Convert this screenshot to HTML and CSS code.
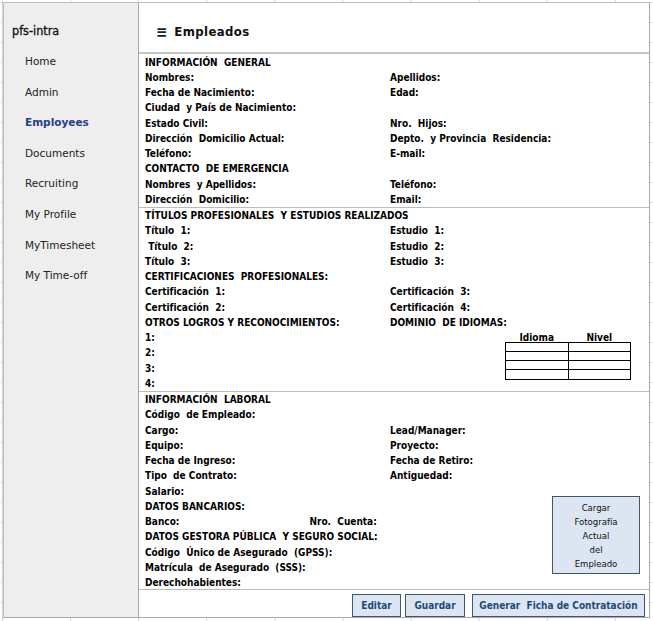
FILE: index.html
```html
<!DOCTYPE html>
<html lang="es">
<head>
<meta charset="utf-8">
<title>pfs-intra - Empleados</title>
<link rel="stylesheet" href="styles.css">
</head>
<body>
<div class="app">
  <aside class="sidebar">
    <div class="brand">pfs-intra</div>
    <nav class="nav">
      <a class="nav-item">Home</a>
      <a class="nav-item">Admin</a>
      <a class="nav-item active">Employees</a>
      <a class="nav-item">Documents</a>
      <a class="nav-item">Recruiting</a>
      <a class="nav-item">My Profile</a>
      <a class="nav-item">MyTimesheet</a>
      <a class="nav-item">My Time-off</a>
    </nav>
  </aside>
  <main class="main">
    <header class="header">
      <span class="menu-icon">≡</span>
      <h1 class="title">Empleados</h1>
    </header>

    <section class="sheet sec1">
      <div class="full">INFORMACIÓN&nbsp; GENERAL</div>
      <div>Nombres:</div><div>Apellidos:</div>
      <div>Fecha de Nacimiento:</div><div>Edad:</div>
      <div>Ciudad&nbsp; y País de Nacimiento:</div><div></div>
      <div>Estado Civil:</div><div>Nro.&nbsp; Hijos:</div>
      <div>Dirección&nbsp; Domicilio Actual:</div><div>Depto.&nbsp; y Provincia&nbsp; Residencia:</div>
      <div>Teléfono:</div><div>E-mail:</div>
      <div class="full">CONTACTO&nbsp; DE EMERGENCIA</div>
      <div>Nombres&nbsp; y Apellidos:</div><div>Teléfono:</div>
      <div>Dirección&nbsp; Domicilio:</div><div>Email:</div>
    </section>

    <section class="sheet sec2">
      <div class="full">TÍTULOS PROFESIONALES&nbsp; Y ESTUDIOS REALIZADOS</div>
      <div>Título&nbsp; 1:</div><div>Estudio&nbsp; 1:</div>
      <div>&nbsp;Título&nbsp; 2:</div><div>Estudio&nbsp; 2:</div>
      <div>Título&nbsp; 3:</div><div>Estudio&nbsp; 3:</div>
      <div>CERTIFICACIONES&nbsp; PROFESIONALES:</div><div></div>
      <div>Certificación&nbsp; 1:</div><div>Certificación&nbsp; 3:</div>
      <div>Certificación&nbsp; 2:</div><div>Certificación&nbsp; 4:</div>
      <div>OTROS LOGROS Y RECONOCIMIENTOS:</div><div>DOMINIO&nbsp; DE IDIOMAS:</div>
      <div>1:</div>
      <div class="lang-wrap">
        <table class="lang">
          <thead><tr><th>Idioma</th><th>Nivel</th></tr></thead>
          <tbody>
            <tr><td></td><td></td></tr>
            <tr><td></td><td></td></tr>
            <tr><td></td><td></td></tr>
            <tr><td></td><td></td></tr>
          </tbody>
        </table>
      </div>
      <div>2:</div>
      <div>3:</div>
      <div>4:</div>
    </section>

    <section class="sheet sec3">
      <div class="full">INFORMACIÓN&nbsp; LABORAL</div>
      <div class="full">Código&nbsp; de Empleado:</div>
      <div>Cargo:</div><div>Lead/Manager:</div>
      <div>Equipo:</div><div>Proyecto:</div>
      <div>Fecha de Ingreso:</div><div>Fecha de Retiro:</div>
      <div>Tipo&nbsp; de Contrato:</div><div>Antiguedad:</div>
      <div class="c1">Salario:</div>
      <div class="photo">Cargar<br>Fotografía<br>Actual<br>del<br>Empleado</div>
      <div class="c1">DATOS BANCARIOS:</div>
      <div class="c1 bank"><span>Banco:</span><span class="cuenta">Nro.&nbsp; Cuenta:</span></div>
      <div class="c1">DATOS GESTORA PÚBLICA&nbsp; Y SEGURO SOCIAL:</div>
      <div class="c1">Código&nbsp; Único de Asegurado&nbsp; (GPSS):</div>
      <div class="c1">Matrícula&nbsp; de Asegurado&nbsp; (SSS):</div>
      <div class="c1">Derechohabientes:</div>
    </section>

    <footer class="actions">
      <button class="btn btn-edit">Editar</button>
      <button class="btn btn-save">Guardar</button>
      <button class="btn btn-wide">Generar&nbsp; Ficha de Contratación</button>
    </footer>
  </main>
</div>
</body>
</html>
```
FILE: styles.css
```css
html, body {
  margin: 0;
  padding: 0;
}
body {
  width: 653px;
  height: 621px;
  overflow: hidden;
  background-color: #ffffff;
  background-image:
    linear-gradient(to right, #d4d4d4 1px, transparent 1px),
    linear-gradient(to bottom, #e2e2e2 1px, transparent 1px);
  background-size: 68.1px 100%, 100% 20px;
  background-position: 2px 0, 0 2px;
}
.app {
  margin: 2px 3px 0 3px;
  height: 616px;
  display: flex;
  border-top: 1px solid #bdbdbd;
  border-left: 1px solid #bdbdbd;
  border-bottom: 1px solid #a8a8a8;
  box-sizing: border-box;
}
.sidebar {
  width: 134px;
  flex: none;
  background: #eeeeee;
  font-family: "DejaVu Sans", Verdana, sans-serif;
}
.brand {
  padding: 19px 0 0 8px;
  font-size: 12.5px;
  line-height: 18px;
  font-family: "DejaVu Sans Condensed", "DejaVu Sans", sans-serif;
  color: #111;
  -webkit-text-stroke: 0.3px #111;
}
.nav {
  margin-top: 6px;
  display: flex;
  flex-direction: column;
}
.nav-item {
  display: block;
  height: 30.6px;
  line-height: 30.6px;
  padding-left: 21px;
  font-size: 10.5px;
  color: #222;
}
.nav-item.active {
  color: #1f3f8f;
  font-weight: bold;
}
.main {
  flex: 1;
  min-width: 0;
  background: #ffffff;
  border-left: 1px solid #a6a6a6;
  border-right: 1px solid #a6a6a6;
  display: flex;
  flex-direction: column;
  font-family: "DejaVu Sans Condensed", "DejaVu Sans", sans-serif;
}
.header {
  height: 51px;
  flex: none;
  border-bottom: 2px solid #c6c6c6;
  display: flex;
  align-items: center;
  padding-left: 17px;
  padding-top: 8px;
  box-sizing: border-box;
}
.menu-icon {
  font-size: 15px;
  font-weight: bold;
  margin-right: 7px;
  color: #222;
}
.title {
  margin: 0;
  font-size: 13px;
  font-weight: bold;
  letter-spacing: 0.4px;
  color: #111;
}
.sheet {
  display: grid;
  grid-template-columns: 245px 1fr;
  grid-auto-rows: 15.25px;
  padding-left: 6px;
  font-size: 10px;
  font-weight: bold;
  line-height: 15.25px;
  color: #000;
  white-space: nowrap;
  border-bottom: 1px solid #bcbcbc;
  flex: none;
}
.sheet > div {
  padding-top: 1.5px;
  box-sizing: border-box;
  line-height: 13.75px;
}
.full {
  grid-column: 1 / -1;
}
.c1 {
  grid-column: 1;
}
.sheet > .lang-wrap {
  grid-column: 2;
  grid-row: span 4;
  padding: 3px 0 0 115px;
  line-height: 9px;
}
.lang {
  border-collapse: collapse;
  width: 126px;
  font-size: 10px;
}
.lang th {
  height: 9px;
  padding: 0;
  line-height: 9px;
  text-decoration: underline;
  font-weight: bold;
  width: 50%;
}
.lang td {
  border: 1px solid #000;
  height: 8.3px;
  padding: 0;
}
.sec3 {
  height: 198px;
  overflow: hidden;
  box-sizing: border-box;
}
.bank {
  display: flex;
}
.cuenta {
  margin-left: 130px;
}
.sheet > .photo {
  grid-column: 2;
  grid-row: 8 / 13;
  justify-self: end;
  align-self: start;
  margin: -2px 9px 0 0;
  width: 88px;
  height: 78px;
  box-sizing: border-box;
  background: #dce6f2;
  border: 1px solid #44546a;
  font-weight: normal;
  font-size: 9.5px;
  line-height: 14px;
  text-align: center;
  padding-top: 4px;
  color: #111;
}
.actions {
  display: flex;
  justify-content: flex-end;
  gap: 4px;
  padding: 4px 4px 0 0;
}
.btn {
  height: 23px;
  padding: 0;
  background: #dce6f2;
  border: 1px solid #3e5878;
  color: #1f497d;
  font-family: "DejaVu Sans Condensed", "DejaVu Sans", sans-serif;
  font-weight: bold;
  font-size: 10px;
  white-space: nowrap;
  border-radius: 0;
}
.btn-edit {
  width: 49px;
}
.btn-save {
  width: 60px;
}
.btn-wide {
  margin-left: 3px;
  width: 173px;
}
```
